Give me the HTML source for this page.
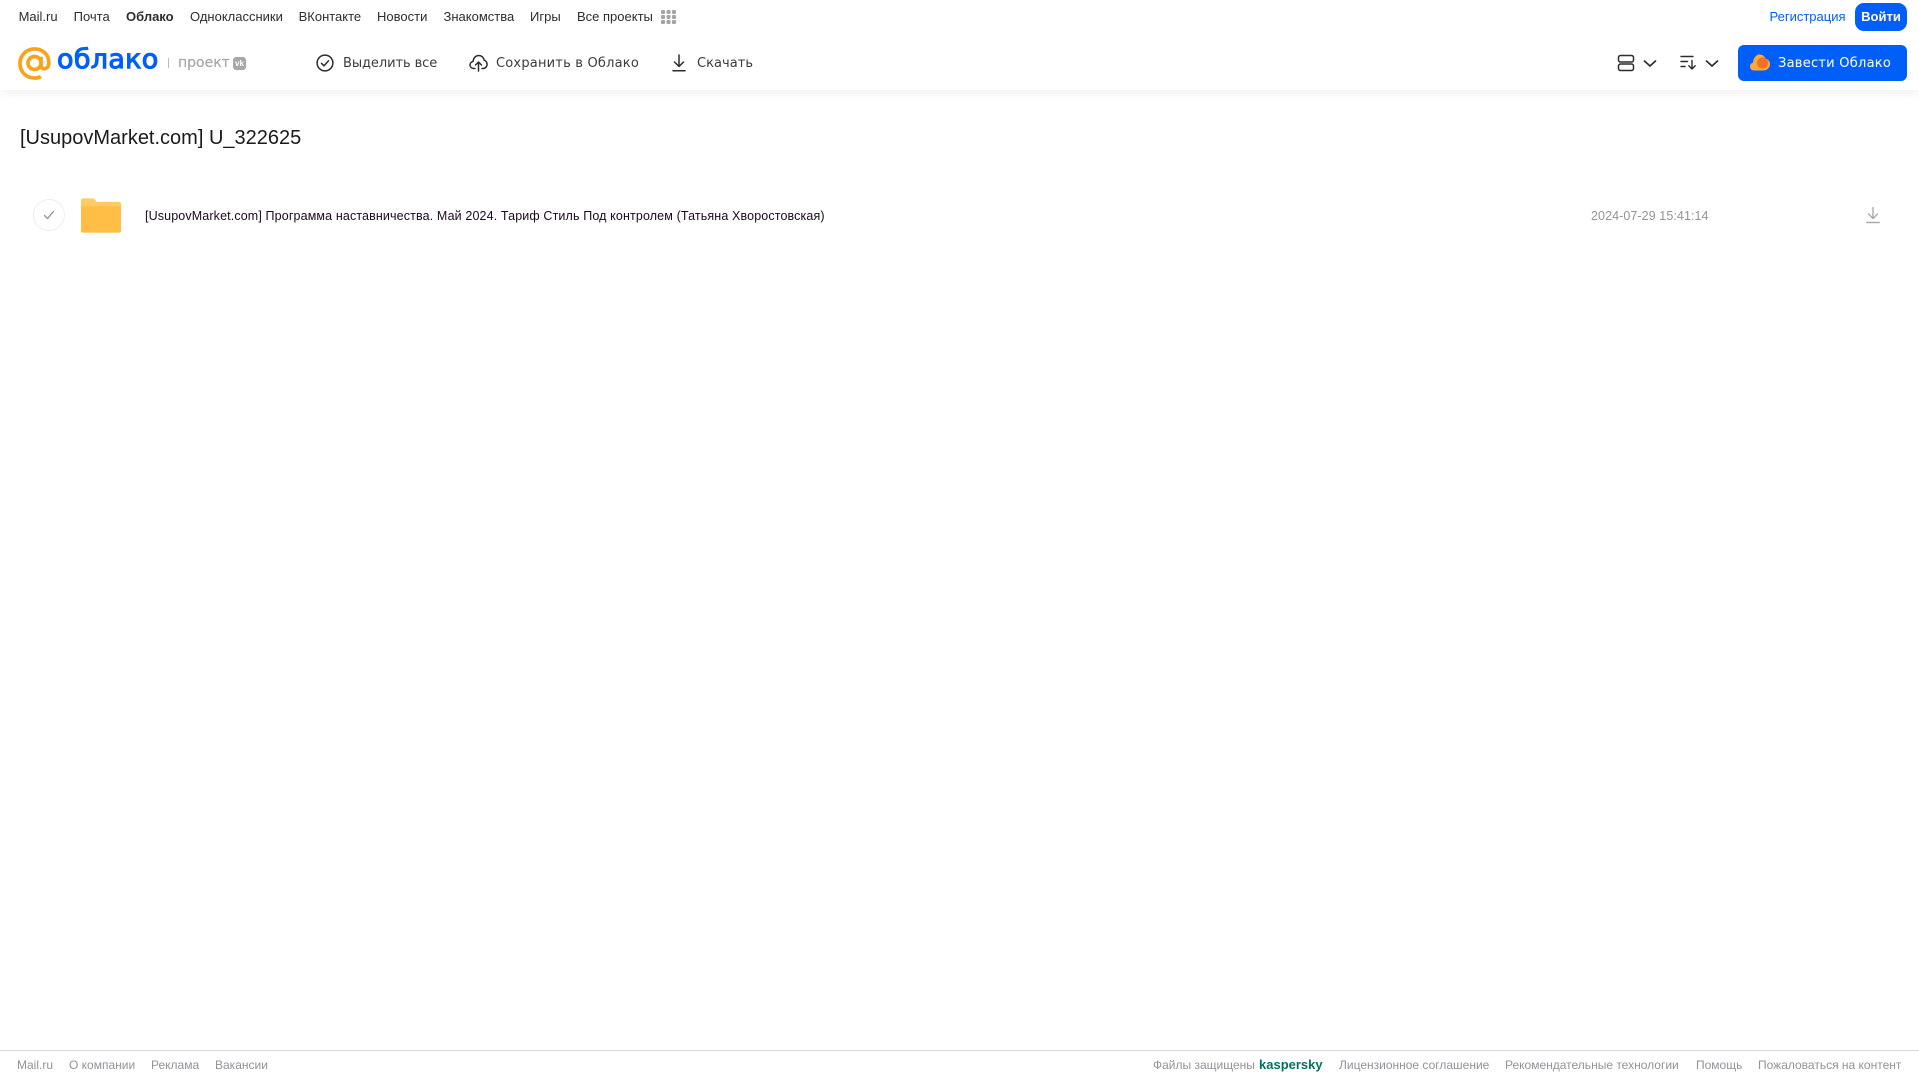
<!DOCTYPE html>
<html lang="ru">
<head>
<meta charset="utf-8">
<title>Облако</title>
<style>
html,body{margin:0;padding:0;background:#fff}
body{width:1919px;height:1079px;position:relative;overflow:hidden;font-family:"Liberation Sans",Arial,sans-serif}
.t{position:absolute;white-space:nowrap;line-height:20px;height:20px}
svg{position:absolute;display:block}
.n{top:7px;font-size:13px;color:#2c2d2e}
.b{top:54px;font-family:"DejaVu Sans",sans-serif;font-size:13px;color:#3a3b3d}
.f{top:1055px;font-size:12px;color:#919399}
#hdr{position:absolute;left:0;top:0;width:1919px;height:90px;background:#fff;box-shadow:0 2px 10px rgba(0,0,0,.07)}
</style>
</head>
<body>
<div id="hdr"></div>

<span class="t n" style="left:18.600px">Mail.ru</span>
<span class="t n" style="left:73.600px">Почта</span>
<span class="t n" style="left:126px;font-weight:bold">Облако</span>
<span class="t n" style="left:190px">Одноклассники</span>
<span class="t n" style="left:298.600px">ВКонтакте</span>
<span class="t n" style="left:377px">Новости</span>
<span class="t n" style="left:443.500px">Знакомства</span>
<span class="t n" style="left:530px">Игры</span>
<span class="t n" style="left:577px">Все проекты</span>
<svg style="left:661px;top:10px" width="15" height="14" viewBox="0 0 15 14" fill="#a5a5a5"><rect x="0" y="0" width="4" height="4" rx="1"/><rect x="5.500" y="0" width="4" height="4" rx="1"/><rect x="11" y="0" width="4" height="4" rx="1"/><rect x="0" y="5" width="4" height="4" rx="1"/><rect x="5.500" y="5" width="4" height="4" rx="1"/><rect x="11" y="5" width="4" height="4" rx="1"/><rect x="0" y="10" width="4" height="4" rx="1"/><rect x="5.500" y="10" width="4" height="4" rx="1"/><rect x="11" y="10" width="4" height="4" rx="1"/></svg>

<span class="t" style="left:1769.500px;top:7px;font-size:13px;color:#005ff9">Регистрация</span>
<div style="position:absolute;left:1855px;top:3px;width:52px;height:28px;border-radius:9px;background:#005ff9;color:#fff;font-size:13px;font-weight:bold;line-height:27px;text-align:center">Войти</div>

<!-- logo -->
<svg style="left:18px;top:47px" width="33" height="33" viewBox="0 0 34 34" fill="none" stroke="#f9a31a" stroke-width="3.800"><circle cx="17" cy="16.500" r="6.700"/><path d="M23.700 10v8.500c0 5.500 7.600 5.500 8-1.500.5-9-6-15-14.700-15C8.500 2 2 9 2 17c0 8.500 6.500 15 15 15 2.500 0 4.800-.5 6.500-1.500"/></svg>
<span class="t" style="left:57px;top:42px;height:36px;line-height:36px;font-family:'DejaVu Sans',sans-serif;font-size:27px;color:#005ff9;letter-spacing:.3px;-webkit-text-stroke:1.100px #005ff9">облако</span>
<div style="position:absolute;left:168px;top:58px;width:1px;height:10px;background:#bbb"></div>
<span class="t" style="left:178px;top:53px;font-family:'DejaVu Sans',sans-serif;font-size:14px;color:#a5a7ab;-webkit-text-stroke:.2px #a5a7ab">проект</span>
<div style="position:absolute;left:233px;top:57px;width:13px;height:13px;border-radius:3px;background:#a5a7ab;color:#fff;font-size:8px;font-weight:bold;line-height:13px;text-align:center">vk</div>

<!-- toolbar -->
<svg style="left:316px;top:54px" width="18" height="18" viewBox="0 0 18 18" fill="none" stroke="#2c2d2e" stroke-width="1.500"><circle cx="9" cy="9" r="7.900"/><path d="M5.500 9.300l2.500 2.500 4.600-5" stroke-linecap="round" stroke-linejoin="round"/></svg>
<span class="t b" style="left:343px;letter-spacing:-.08px">Выделить все</span>

<svg style="left:469px;top:54px" width="19" height="18" viewBox="0 0 19 18" fill="none" stroke="#2c2d2e" stroke-width="1.500" stroke-linecap="round" stroke-linejoin="round"><path d="M6 14.500H4.800C2.600 14.500 1 13 1 11c0-1.800 1.300-3.200 3-3.500C4.400 4 6.700 1.500 9.700 1.500c2.900 0 5 2 5.500 4.700 1.700.4 2.900 2.300 2.900 4.200 0 2.300-1.700 4.100-3.900 4.100H13"/><path d="M9.500 17V8.500M6.500 11l3-3 3 3"/></svg>
<span class="t b" style="left:496px;letter-spacing:.2px">Сохранить в Облако</span>

<svg style="left:671px;top:54px" width="16" height="18" viewBox="0 0 16 18" fill="none" stroke="#2c2d2e" stroke-width="1.500" stroke-linecap="round" stroke-linejoin="round"><path d="M8 1v11M3.500 8l4.500 4.500L12.500 8M2 16.800h12"/></svg>
<span class="t b" style="left:697px;letter-spacing:.05px">Скачать</span>

<svg style="left:1617px;top:54px" width="18" height="18" viewBox="0 0 18 18" fill="none" stroke="#2c2d2e" stroke-width="1.500"><rect x="1.500" y="1.500" width="15" height="6.500" rx="2"/><rect x="1.500" y="10" width="15" height="6.500" rx="2"/></svg>
<svg style="left:1643px;top:59px" width="14" height="9" viewBox="0 0 14 9" fill="none" stroke="#2c2d2e" stroke-width="1.700" stroke-linecap="round" stroke-linejoin="round"><path d="M1.500 2l5.500 5 5.500-5"/></svg>
<svg style="left:1680px;top:55px" width="18" height="15" viewBox="0 0 18 15" fill="none" stroke="#2c2d2e" stroke-width="1.400" stroke-linecap="round" stroke-linejoin="round"><path d="M1 1.500h12M1 6.500h6.500M1 11.500h4M12 5.500v8.500M8.800 10.800l3.200 3.200 3.200-3.200"/></svg>
<svg style="left:1705px;top:59px" width="14" height="9" viewBox="0 0 14 9" fill="none" stroke="#2c2d2e" stroke-width="1.700" stroke-linecap="round" stroke-linejoin="round"><path d="M1.500 2l5.500 5 5.500-5"/></svg>

<div style="position:absolute;left:1738px;top:45px;width:169px;height:36px;border-radius:6px;background:#005ff9"></div>
<svg style="left:1750px;top:54px" width="20" height="17" viewBox="0 0 20 17"><path d="M4 16.500C1.700 16.500 0 14.700 0 12.500c0-2 1.300-3.500 3-3.900C3.500 4 6 .5 9.500.5c2.800 0 5 1.700 6 4.200 2.500.4 4.500 2.500 4.500 5.300 0 3.700-2.900 6.500-6.500 6.500z" fill="#ffa930"/><circle cx="12.500" cy="9" r="5.500" fill="#f2702a"/></svg>
<span class="t" style="left:1778px;top:54px;font-family:'DejaVu Sans',sans-serif;font-size:13px;color:#fff;letter-spacing:.25px">Завести Облако</span>

<!-- title -->
<span class="t" style="left:20px;top:124px;height:28px;line-height:28px;font-size:20px;color:#1a1a1a">[UsupovMarket.com] U_322625</span>

<!-- row -->
<div style="position:absolute;left:33px;top:199px;width:30px;height:30px;border:1px solid #eee;border-radius:50%"></div>
<svg style="left:43px;top:210px" width="12" height="10" viewBox="0 0 12 10" fill="none" stroke="#8f9196" stroke-width="1.300" stroke-linecap="round" stroke-linejoin="round"><path d="M1.500 5.500l3 3 6-7"/></svg>
<svg style="left:81px;top:198px" width="40" height="35" viewBox="0 0 41 35"><path d="M2 0h9.500c1.300 0 2 .4 3 1.500L16 3.500h23c1.100 0 2 .9 2 2V33c0 1.100-.9 2-2 2H2c-1.100 0-2-.9-2-2V2C0 .9.900 0 2 0z" fill="#ffcb63"/><path d="M0 8h41v25c0 1.100-.9 2-2 2H2c-1.100 0-2-.9-2-2z" fill="#ffbe46"/></svg>
<span class="t" style="left:145px;top:206px;font-size:12.500px;letter-spacing:.13px;color:#1a0a1e">[UsupovMarket.com] Программа наставничества. Май 2024. Тариф Стиль Под контролем (Татьяна Хворостовская)</span>
<span class="t" style="left:1591px;top:206px;font-size:12.500px;letter-spacing:.08px;color:#919399">2024-07-29 15:41:14</span>
<svg style="left:1866px;top:206px" width="14" height="18" viewBox="0 0 14 18" fill="none" stroke="#a8a9ad" stroke-width="1.400" stroke-linecap="round" stroke-linejoin="round"><path d="M7 1.500v10.500M2.500 8l4.500 4.500L11.500 8"/><path d="M.8 16.500h12.400"/></svg>

<!-- footer -->
<div style="position:absolute;left:0;top:1050px;width:1919px;height:1px;background:#d8d8d8"></div>
<span class="t f" style="left:17px">Mail.ru</span>
<span class="t f" style="left:69px">О компании</span>
<span class="t f" style="left:151px">Реклама</span>
<span class="t f" style="left:215px">Вакансии</span>
<span class="t f" style="left:1153px">Файлы защищены</span>
<span class="t" style="left:1259px;top:1055px;font-size:13px;font-weight:bold;color:#00735f">kaspersky</span>
<span class="t f" style="left:1339px">Лицензионное соглашение</span>
<span class="t f" style="left:1505px">Рекомендательные технологии</span>
<span class="t f" style="left:1696px">Помощь</span>
<span class="t f" style="left:1758px">Пожаловаться на контент</span>
</body>
</html>
